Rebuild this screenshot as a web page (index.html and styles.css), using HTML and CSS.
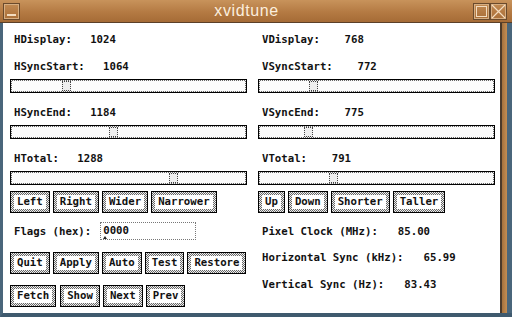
FILE: index.html
```html
<!DOCTYPE html>
<html>
<head>
    <title>xvidtune</title>
    <meta name="viewport" content="width=device-width, initial-scale=1.0">
    <link rel="stylesheet" href="styles.css">
</head>
<body>
    <div class="window">
        <div class="titlebar">
            <div class="tb-btn"><span class="min-bar"></span></div>
            <div class="title">xvidtune</div>
            <div class="tb-btn"><span class="max-sq"></span></div>
            <div class="tb-btn">
                <svg width="15" height="15" viewBox="0 0 15 15"><path d="M1 1 L14 14 M14 1 L1 14" stroke="#f3dcc0" stroke-width="1.2" fill="none"/></svg>
            </div>
        </div>
        <div class="frame">
            <div class="client">
                <div class="col">
                    <div class="label first"><span class="name">HDisplay:</span><span class="value">1024</span></div>

                    <div class="param">
                        <div class="label"><span class="name">HSyncStart:</span><span class="value">1064</span></div>
                        <div class="slider"><div class="track"><span class="thumb" style="left: 50px;"></span></div></div>
                    </div>
                    <div class="param">
                        <div class="label"><span class="name">HSyncEnd:</span><span class="value">1184</span></div>
                        <div class="slider"><div class="track"><span class="thumb" style="left: 97px;"></span></div></div>
                    </div>
                    <div class="param">
                        <div class="label"><span class="name">HTotal:</span><span class="value">1288</span></div>
                        <div class="slider"><div class="track"><span class="thumb" style="left: 157px;"></span></div></div>
                    </div>

                    <div class="buttons first-btns">
                        <button><span>Left</span></button>
                        <button><span>Right</span></button>
                        <button><span>Wider</span></button>
                        <button><span>Narrower</span></button>
                    </div>

                    <div class="flags">
                        <span class="name">Flags (hex):</span>
                        <div class="flag-input">0000</div>
                    </div>

                    <div class="buttons row-btns">
                        <button><span>Quit</span></button>
                        <button><span>Apply</span></button>
                        <button><span>Auto</span></button>
                        <button><span>Test</span></button>
                        <button><span>Restore</span></button>
                    </div>
                    <div class="buttons last-btns">
                        <button><span>Fetch</span></button>
                        <button class="wide-gap"><span>Show</span></button>
                        <button><span>Next</span></button>
                        <button><span>Prev</span></button>
                    </div>
                </div>

                <div class="col">
                    <div class="label first"><span class="name">VDisplay:</span><span class="value">768</span></div>

                    <div class="param">
                        <div class="label"><span class="name">VSyncStart:</span><span class="value">772</span></div>
                        <div class="slider"><div class="track"><span class="thumb" style="left: 49px;"></span></div></div>
                    </div>
                    <div class="param">
                        <div class="label"><span class="name">VSyncEnd:</span><span class="value">775</span></div>
                        <div class="slider"><div class="track"><span class="thumb" style="left: 44px;"></span></div></div>
                    </div>
                    <div class="param">
                        <div class="label"><span class="name">VTotal:</span><span class="value">791</span></div>
                        <div class="slider"><div class="track"><span class="thumb" style="left: 69px;"></span></div></div>
                    </div>

                    <div class="buttons first-btns">
                        <button><span>Up</span></button>
                        <button><span>Down</span></button>
                        <button><span>Shorter</span></button>
                        <button><span>Taller</span></button>
                    </div>

                    <div class="info pixel">Pixel Clock (MHz):<span class="reading">85.00</span></div>
                    <div class="info">Horizontal Sync (kHz):<span class="reading">65.99</span></div>
                    <div class="info">Vertical Sync (Hz):<span class="reading">83.43</span></div>
                </div>
            </div>
            <div class="rframe"></div>
        </div>
    </div>
</body>
</html>
```

FILE: styles.css
```css
body {
    margin: 0;
    background-color: #4a667b;
    font-family: "DejaVu Sans Mono", "Liberation Mono", monospace;
    font-weight: bold;
    font-size: 10.7px;
    color: #111;
}
.window {
    width: 512px;
    height: 317px;
    display: flex;
    flex-direction: column;
    overflow: hidden;
}
.titlebar {
    height: 22px;
    display: flex;
    align-items: center;
    padding: 0 5px 0 3px;
    background: linear-gradient(#c8935b, #b47a43 55%, #a56b36);
    border-bottom: 1px solid #5b4028;
}
.title {
    flex: 1;
    text-align: center;
    font-family: "Liberation Sans", Arial, sans-serif;
    font-weight: normal;
    font-size: 16px;
    color: #fbeedd;
    letter-spacing: 0.6px;
}
.tb-btn {
    width: 15px;
    height: 15px;
    border: 1px solid #6a4a2c;
    box-shadow: inset 0 0 0 1px #d6ae82;
    display: flex;
    align-items: center;
    justify-content: center;
    position: relative;
}
.min-bar {
    position: absolute;
    left: 3px;
    right: 3px;
    bottom: 3px;
    height: 2px;
    background-color: #f3dcc0;
}
.max-sq {
    width: 9px;
    height: 9px;
    border: 1px solid #f3dcc0;
}
.frame {
    flex: 1;
    display: flex;
    border-left: 3px solid #4a667b;
    border-bottom: 4px solid #3f5a6e;
}
.client {
    width: 492px;
    background-color: #fff;
    padding: 0 0 0 7px;
    display: flex;
    gap: 11px;
}
.rframe {
    width: 10px;
    border-left: 2px solid #4c3a2a;
    background: linear-gradient(90deg, #a4713e, #c58e53 50%, #9a6836 5px, #4a667b 5px);
}
.col {
    width: 237px;
    display: flex;
    flex-direction: column;
    padding-top: 9px;
}
.label {
    height: 16px;
    line-height: 16px;
    padding-left: 4px;
    display: flex;
    white-space: pre;
}
.value {
    width: 44px;
    text-align: right;
}
.param {
    margin-top: 11px;
}
.param + .param {
    margin-top: 12px;
}
.slider {
    margin-top: 4px;
    height: 14px;
    box-sizing: border-box;
    border: 1px solid #000;
    padding: 1px;
    background: repeating-conic-gradient(#666 0 25%, #f0f0f0 0 50%) 0 0 / 2px 2px;
}
.track {
    position: relative;
    height: 100%;
    background-color: #fbfbfb;
}
.thumb {
    position: absolute;
    top: 0;
    width: 9px;
    height: 10px;
    box-sizing: border-box;
    border: 1px dotted #444;
    background-color: #eee;
}
.buttons {
    display: flex;
    gap: 3px;
}
.first-btns {
    margin-top: 6px;
}
.row-btns {
    margin-top: 12px;
}
.last-btns {
    margin-top: 11px;
}
.wide-gap {
    margin-left: 1px;
}
button {
    font: inherit;
    color: inherit;
    height: 22px;
    margin: 0;
    padding: 3px;
    border: 1px solid #000;
    background: repeating-conic-gradient(#666 0 25%, #f0f0f0 0 50%) 0 0 / 2px 2px;
    cursor: pointer;
}
button span {
    display: block;
    height: 14px;
    line-height: 14px;
    padding: 0 3px;
    background-color: #fff;
}
.flags {
    margin-top: 9px;
    height: 18px;
    display: flex;
    align-items: center;
    padding-left: 4px;
}
.flag-input {
    margin-left: 9px;
    width: 96px;
    height: 18px;
    box-sizing: border-box;
    border: 1px dotted #777;
    padding-left: 2px;
    line-height: 16px;
    position: relative;
}
.flag-input::after {
    content: "";
    position: absolute;
    left: 2px;
    bottom: 0;
    border-left: 2px solid transparent;
    border-right: 2px solid transparent;
    border-bottom: 3px solid #222;
}
.info {
    height: 16px;
    line-height: 16px;
    padding-left: 4px;
    margin-top: 10px;
    white-space: pre;
}
.info.pixel {
    margin-top: 11px;
}
.info + .info + .info {
    margin-top: 11px;
}
.reading {
    margin-left: 20px;
}
```
